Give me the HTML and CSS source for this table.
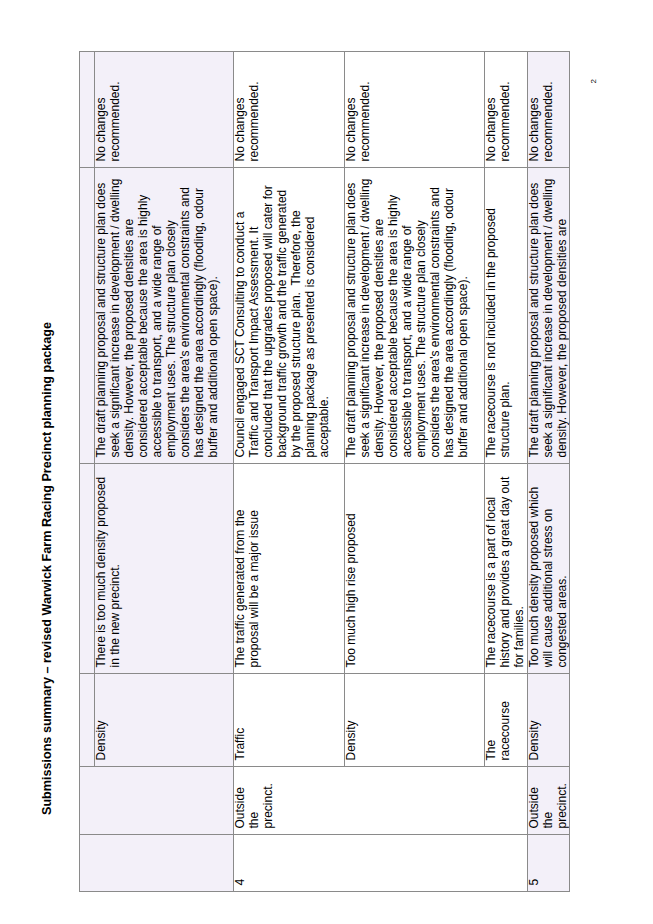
FILE: index.html
```html
<!DOCTYPE html>
<html lang="en">
<head>
<meta charset="utf-8">
<title>Submissions summary</title>
<link rel="stylesheet" href="styles.css">
</head>
<body>
<div class="viewport">
  <div class="page">
    <h1 class="title">Submissions summary – revised Warwick Farm Racing Precinct planning package</h1>
    <table class="summary">
      <colgroup>
        <col class="c-num">
        <col class="c-loc">
        <col class="c-topic">
        <col class="c-sub">
        <col class="c-resp">
        <col class="c-rec">
      </colgroup>
      <tbody>
        <tr class="r1 shade">
          <td rowspan="2"></td>
          <td rowspan="2"></td>
          <td></td>
          <td></td>
          <td></td>
          <td></td>
        </tr>
        <tr class="r2 shade">
          <td>Density</td>
          <td>There is too much density proposed<br>in the new precinct.</td>
          <td>The draft planning proposal and structure plan does<br>seek a significant increase in development / dwelling<br>density. However, the proposed densities are<br>considered acceptable because the area is highly<br>accessible to transport, and a wide range of<br>employment uses. The structure plan closely<br>considers the area's environmental constraints and<br>has designed the area accordingly (flooding, odour<br>buffer and additional open space).</td>
          <td>No changes<br>recommended.</td>
        </tr>
        <tr class="r3">
          <td rowspan="3">4</td>
          <td rowspan="3">Outside<br>the<br>precinct.</td>
          <td>Traffic</td>
          <td>The traffic generated from the<br>proposal will be a major issue</td>
          <td>Council engaged SCT Consulting to conduct a<br>Traffic and Transport Impact Assessment. It<br>concluded that the upgrades proposed will cater for<br>background traffic growth and the traffic generated<br>by the proposed structure plan.&nbsp; Therefore, the<br>planning package as presented is considered<br>acceptable.</td>
          <td>No changes<br>recommended.</td>
        </tr>
        <tr class="r4">
          <td>Density</td>
          <td>Too much high rise proposed</td>
          <td>The draft planning proposal and structure plan does<br>seek a significant increase in development / dwelling<br>density. However, the proposed densities are<br>considered acceptable because the area is highly<br>accessible to transport, and a wide range of<br>employment uses. The structure plan closely<br>considers the area's environmental constraints and<br>has designed the area accordingly (flooding, odour<br>buffer and additional open space).</td>
          <td>No changes<br>recommended.</td>
        </tr>
        <tr class="r5">
          <td>The<br>racecourse</td>
          <td>The racecourse is a part of local<br>history and provides a great day out<br>for families.</td>
          <td>The racecourse is not included in the proposed<br>structure plan.</td>
          <td>No changes<br>recommended.</td>
        </tr>
        <tr class="r6 shade">
          <td><div class="clip">5</div></td>
          <td><div class="clip">Outside<br>the<br>precinct.</div></td>
          <td><div class="clip">Density</div></td>
          <td><div class="clip">Too much density proposed which<br>will cause additional stress on<br>congested areas.</div></td>
          <td><div class="clip">The draft planning proposal and structure plan does<br>seek a significant increase in development / dwelling<br>density. However, the proposed densities are</div></td>
          <td><div class="clip">No changes<br>recommended.</div></td>
        </tr>
      </tbody>
    </table>
    <div class="pagenum">2</div>
  </div>
</div>
</body>
</html>
```

FILE: styles.css
```css
html, body {
  margin: 0;
  padding: 0;
  background: #ffffff;
}

.viewport {
  width: 653px;
  height: 924px;
  overflow: hidden;
  position: relative;
}

.page {
  width: 924px;
  height: 653px;
  box-sizing: border-box;
  padding-top: 40px;
  transform-origin: 0 0;
  transform: translateY(924px) rotate(-90deg);
  font-family: "Liberation Sans", Arial, sans-serif;
  font-size: 12px;
  color: #000000;
}

.title {
  margin: 0 0 24px 0;
  padding-left: 109px;
  font-size: 12.6px;
  line-height: 15px;
  font-weight: bold;
  white-space: nowrap;
}

.summary {
  margin-left: 32px;
  width: 840px;
  table-layout: fixed;
  border-collapse: collapse;
  font-size: 12px;
  line-height: 13.95px;
}

.c-num { width: 57px; }
.c-loc { width: 68px; }
.c-topic { width: 93px; }
.c-sub { width: 210px; }
.c-resp { width: 296px; }
.c-rec { width: 116px; }

.summary td {
  border: 1px solid #8a8a8a;
  padding: 0 5px 0 5.5px;
  vertical-align: top;
  text-align: left;
}

.shade td {
  background: #f3f0f9;
}

.r1 { height: 15px; }
.r2 { height: 139px; }
.r3 { height: 111px; }
.r4 { height: 140px; }
.r5 { height: 43px; }
.r6 { height: 41px; }

.clip {
  max-height: 41px;
  overflow: hidden;
}

.pagenum {
  margin-top: 19px;
  padding-right: 79px;
  text-align: right;
  font-size: 8px;
  line-height: 10px;
}
```
